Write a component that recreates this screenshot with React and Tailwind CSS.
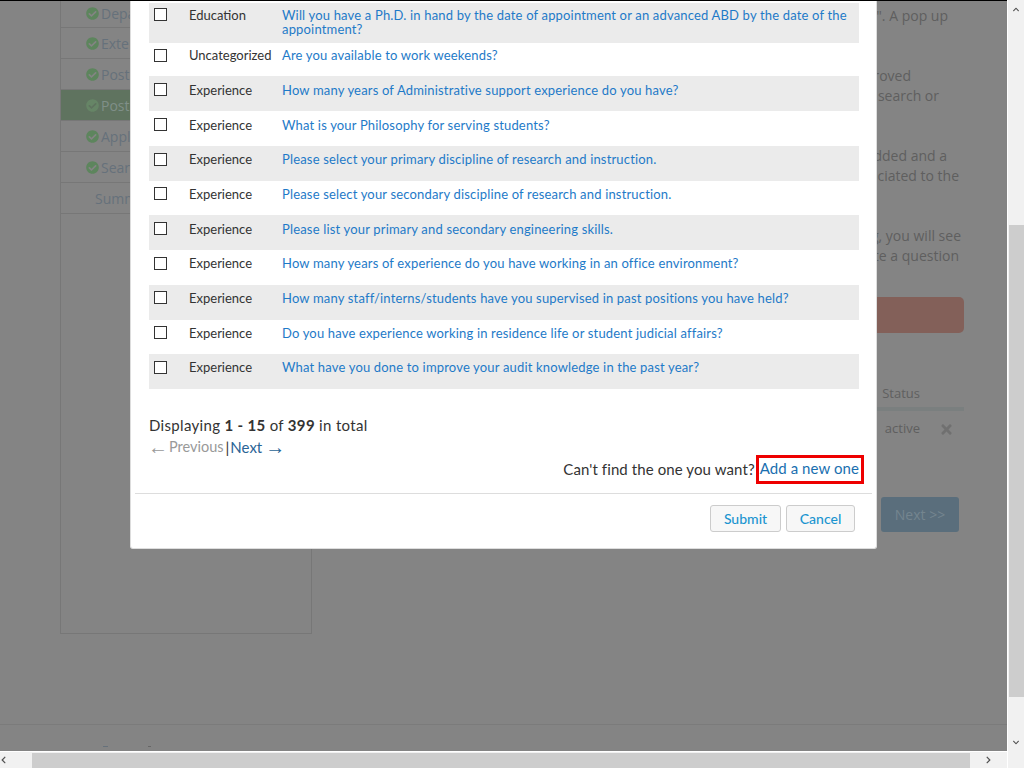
import React from "react";
import { FaCheckCircle, FaTimes, FaChevronUp, FaChevronDown, FaChevronLeft, FaChevronRight } from "react-icons/fa";

const rows = [
  ["Education", "Will you have a Ph.D. in hand by the date of appointment or an advanced ABD by the date of the appointment?", "h-[40px]", true, "mt-[5px]", "mt-[5px]"],
  ["Uncategorized", "Are you available to work weekends?", "h-[33px]", false, "mt-[6px]", "mt-[5px]"],
  ["Experience", "How many years of Administrative support experience do you have?", "h-[35px]", true, "mt-[7px]", "mt-[7px]"],
  ["Experience", "What is your Philosophy for serving students?", "h-[35px]", false, "mt-[7px]", "mt-[7px]"],
  ["Experience", "Please select your primary discipline of research and instruction.", "h-[35px]", true, "mt-[7px]", "mt-[6px]"],
  ["Experience", "Please select your secondary discipline of research and instruction.", "h-[34px]", false, "mt-[6px]", "mt-[6px]"],
  ["Experience", "Please list your primary and secondary engineering skills.", "h-[35px]", true, "mt-[7px]", "mt-[7px]"],
  ["Experience", "How many years of experience do you have working in an office environment?", "h-[35px]", false, "mt-[7px]", "mt-[6px]"],
  ["Experience", "How many staff/interns/students have you supervised in past positions you have held?", "h-[35px]", true, "mt-[6px]", "mt-[6px]"],
  ["Experience", "Do you have experience working in residence life or student judicial affairs?", "h-[34px]", false, "mt-[6px]", "mt-[6px]"],
  ["Experience", "What have you done to improve your audit knowledge in the past year?", "h-[35px]", true, "mt-[7px]", "mt-[6px]"],
];

const side = [
  ["Department", true, false, "h-[28px]"],
  ["External", true, false, "h-[31px]"],
  ["Posting", true, false, "h-[31px]"],
  ["Posting Questions", true, true, "h-[31px]"],
  ["Applicants", true, false, "h-[31px]"],
  ["Search", true, false, "h-[31px]"],
  ["Summary", false, false, "h-[31px]"],
];

function Row({ cat, q, h, gray, boxMt, textMt }) {
  return (
    <div className={`flex items-start ${h} ${gray ? "bg-[#ebebeb]" : "bg-white"}`}>
      <span className={`${boxMt} ml-[5px] w-[13px] h-[13px] shrink-0 border border-[#333] bg-white`} />
      <span className={`${textMt} ml-[22px] w-[93px] shrink-0 text-[13px] leading-[14px] text-[#333]`}>{cat}</span>
      <span className={`${textMt} pr-[10px] text-[13px] leading-[14px] text-[#1e7ac8] tracking-[0.17px]`}>{q}</span>
    </div>
  );
}

export default function App() {
  return (
    <div className="relative w-[1024px] h-[768px] overflow-hidden flex font-['Open_Sans',sans-serif] bg-white">
      <div className="w-[1007px] h-[768px] flex flex-col">
        <div className="relative h-[751px] bg-[#848484] border-t border-black overflow-hidden flex flex-col">
          <div className="flex flex-1 min-h-0">
            <aside className="ml-[60px] w-[252px] h-[634px] -mt-px border-x border-b border-[#777] shrink-0">
              {side.map(([label, ok, active, h], i) => (
                <div
                  key={i}
                  className={`${h} flex items-center border-b border-[#777] text-[14px] ${active ? "bg-[#5f735f] text-[#7f8f88]" : "text-[#66717b]"} ${ok ? "pl-[25px]" : "pl-[34px]"}`}
                >
                  {ok && <FaCheckCircle className={`w-[13px] h-[13px] mr-[2px] ${active ? "text-[#668566]" : "text-[#5d855d]"}`} />}
                  <span>{label}</span>
                </div>
              ))}
            </aside>
            <main className="flex-1 text-[14px] leading-[20px] text-[#5f5f5f] pr-[43px] min-w-0">
              <div className="whitespace-nowrap text-right">
                <p className="mt-[5px] mr-[16px]">". A pop up</p>
                <p className="mt-[40px] mr-[53px]">approved</p>
                <p className="mr-[25px]">the search or</p>
                <p className="mt-[40px] mr-[17px]">added and a</p>
                <p className="mr-[5px]">associated to the</p>
                <p className="mt-[40px] mr-[3px]">listing, you will see</p>
                <p className="mr-[5px]">create a question</p>
              </div>
              <div className="mt-[31px] h-[36px] rounded-[5px] bg-[#836059]" />
              <div className="mt-[50px] flex text-[13px] h-[28px] border-b-4 border-[#7a7f7f] justify-end pr-[44px]">
                <span className="leading-[20px] text-[#606060]">Status</span>
              </div>
              <div className="mt-[5px] h-[24px] flex justify-end items-center text-[13px] text-[#5f5f5f]">
                <span className="-mt-[1px]">active</span>
                <FaTimes className="mt-[2px] ml-[19px] mr-[10px] w-[15px] h-[15px] text-[#707070]" />
              </div>
              <div className="mt-[57px] flex justify-end pr-[5px]">
                <span className="w-[78px] h-[35px] rounded-[3px] bg-[#5a6e7c] text-[14px] leading-[35px] text-center text-[#74858f]">Next &gt;&gt;</span>
              </div>
            </main>
          </div>
          <footer className="h-[27px] border-t border-[#7b7b7b] shrink-0 flex items-end pl-[103px] pb-[4px]">
            <span className="w-[5px] h-px bg-[#66717b]" />
            <span className="ml-[40px] w-[3px] h-px bg-[#666]" />
          </footer>

          <section className="absolute left-[130px] top-0 w-[747px] h-[548px] bg-white border border-t-0 border-[#ddd] rounded-b-[3px] flex flex-col font-['Lato','Noto_Sans',sans-serif]">
            <div className="pl-[18px] pr-[17px] pt-[2px]">
              {rows.map(([cat, q, h, gray, boxMt, textMt], i) => (
                <Row key={i} cat={cat} q={q} h={h} gray={gray} boxMt={boxMt} textMt={textMt} />
              ))}
              <p className="mt-[26px] text-[15px] leading-[20px] text-[#333] tracking-[0.33px]">
                Displaying <b>1 - 15</b> of <b>399</b> in total
              </p>
              <p className="mt-[2px] h-[20px] flex items-center text-[15px] leading-[20px] text-[#333] whitespace-pre">
                <span className="-ml-[1px] font-['Liberation_Sans',sans-serif] text-[20px] leading-[20px] text-[#999]">←</span>
                <span className="ml-[1px] text-[14.5px] text-[#999]">Previous</span>
                <span className="ml-[2px] mr-[1px]">|</span>
                <span className="text-[#2a6496]">Next</span>
                <span className="ml-[3px] font-['Liberation_Sans',sans-serif] text-[20px] leading-[20px] text-[#2a6496]">→</span>
              </p>
            </div>
            <div className="-mt-[2px] flex justify-end items-center pr-[12px] h-[29px] text-[15px] text-[#333]">
              <span className="mr-[1px] tracking-[0.1px]">Can't find the one you want?</span>
              <span className="border-[3px] border-[#ee0000] h-[29px] pl-[1px] pr-[2px] leading-[21px] tracking-[0.08px] text-[#1a6fb0]">Add a new one</span>
            </div>
            <div className="mt-[9px] mx-[4px] border-t border-[#ddd]" />
            <div className="mt-[11px] flex justify-end gap-[5px] pr-[21px]">
              <button className="w-[71px] h-[27px] rounded-[3px] border border-[#ccc] bg-[#f7f7f7] text-[14px] font-medium text-[#1b95d0]">Submit</button>
              <button className="w-[69px] h-[27px] rounded-[3px] border border-[#ccc] bg-[#f7f7f7] text-[14px] font-medium text-[#1b95d0]">Cancel</button>
            </div>
          </section>
        </div>
        <div className="h-[17px] border-t border-white bg-[#f1f1f1] flex items-center">
          <div className="w-[32px] h-full flex items-center"><FaChevronLeft className="w-[7px] h-[8px] text-[#505050]" /></div>
          <div className="w-[938px] h-[15px] bg-[#cdcdcd]" />
          <div className="flex-1 flex justify-center"><FaChevronRight className="w-[7px] h-[8px] text-[#505050]" /></div>
        </div>
      </div>
      <div className="w-[17px] h-[768px] border-l border-white bg-[#f1f1f1] flex flex-col items-center">
        <div className="h-[225px] w-full flex justify-center pt-[6px]"><FaChevronUp className="w-[8px] h-[7px] text-[#505050]" /></div>
        <div className="w-[15px] h-[472px] bg-[#cdcdcd]" />
        <div className="mt-[42px]"><FaChevronDown className="w-[8px] h-[7px] text-[#505050]" /></div>
      </div>
    </div>
  );
}
